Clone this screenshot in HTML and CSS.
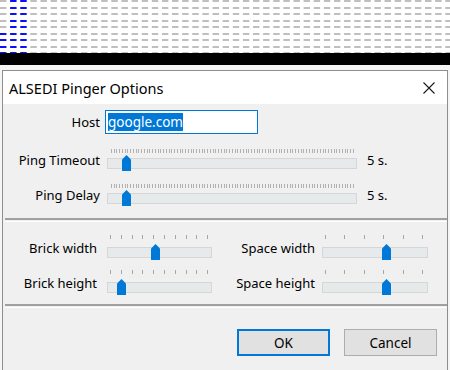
FILE: index.html
```html
<!DOCTYPE html>
<html lang="en">
<head>
    <meta charset="UTF-8">
    <meta name="viewport" content="width=device-width, initial-scale=1.0">
    <title>ALSEDI Pinger Options</title>
    <link rel="stylesheet" href="styles.css">
</head>
<body>
    <div class="desktop">
        <svg class="bricks" width="450" height="53" shape-rendering="crispEdges">
            <defs>
                <pattern id="brickGrey" width="10.12" height="13" patternUnits="userSpaceOnUse">
                    <rect x="0" y="0" width="6" height="2" fill="#bfbfbf"/>
                    <rect x="0" y="7" width="6" height="2" fill="#bfbfbf"/>
                </pattern>
                <pattern id="brickBlue" width="10.12" height="13" patternUnits="userSpaceOnUse">
                    <rect x="0" y="0" width="6" height="2" fill="#0a10ff"/>
                    <rect x="0" y="7" width="6" height="2" fill="#0a10ff"/>
                </pattern>
            </defs>
            <rect width="450" height="53" fill="#fff"/>
            <rect width="450" height="53" fill="url(#brickGrey)"/>
            <rect x="0" y="0" width="9" height="53" fill="#fff"/>
            <rect x="0" y="0" width="9" height="30" fill="url(#brickGrey)"/>
            <rect x="0" y="30" width="9" height="23" fill="url(#brickBlue)"/>
            <rect x="9" y="0" width="19" height="53" fill="#fff"/>
            <rect x="9" y="0" width="19" height="53" fill="url(#brickBlue)"/>
        </svg>
        <div class="band"></div>

        <div class="shade">
            <div class="dialog">
                <div class="titlebar">
                    <span class="title">ALSEDI Pinger Options</span>
                    <svg class="close" width="12" height="12" viewBox="0 0 12 12">
                        <path d="M0.5 0.5 L11.5 11.5 M11.5 0.5 L0.5 11.5" stroke="#1a1a1a" stroke-width="1.1" fill="none"/>
                    </svg>
                </div>

                <div class="content">
                    <section class="ping">
                        <label class="lbl">Host</label>
                        <div class="host"><span class="sel">google.com</span></div>
                        <span></span>

                        <label class="lbl lbl-slider">Ping Timeout</label>
                        <div class="slider slider-fine">
                            <div class="ticks"></div>
                            <div class="track"></div>
                            <div class="thumb" style="left: 15px"></div>
                        </div>
                        <span class="value">5 s.</span>

                        <label class="lbl lbl-slider">Ping Delay</label>
                        <div class="slider slider-fine">
                            <div class="ticks"></div>
                            <div class="track"></div>
                            <div class="thumb" style="left: 15px"></div>
                        </div>
                        <span class="value">5 s.</span>
                    </section>

                    <hr class="sep">

                    <section class="sizes">
                        <label class="lbl">Brick width</label>
                        <div class="slider slider-brick">
                            <div class="ticks"></div>
                            <div class="track"></div>
                            <div class="thumb" style="left: 44px"></div>
                        </div>
                        <label class="lbl lbl-space">Space width</label>
                        <div class="slider slider-space">
                            <div class="ticks"></div>
                            <div class="track"></div>
                            <div class="thumb" style="left: 60px"></div>
                        </div>

                        <label class="lbl">Brick height</label>
                        <div class="slider slider-brick">
                            <div class="ticks"></div>
                            <div class="track"></div>
                            <div class="thumb" style="left: 10px"></div>
                        </div>
                        <label class="lbl lbl-space">Space height</label>
                        <div class="slider slider-space">
                            <div class="ticks"></div>
                            <div class="track"></div>
                            <div class="thumb" style="left: 60px"></div>
                        </div>
                    </section>

                    <hr class="sep sep-bottom">

                    <div class="buttons">
                        <button class="btn btn-default">OK</button>
                        <button class="btn">Cancel</button>
                    </div>
                </div>
            </div>
        </div>
    </div>
</body>
</html>
```

FILE: styles.css
```css
body {
    margin: 0;
    font-family: "Noto Sans", sans-serif;
    font-size: 13px;
    color: #000;
}

.desktop {
    width: 450px;
    height: 370px;
    overflow: hidden;
    background-color: #f5f5f5;
}

.bricks {
    display: block;
}

.band {
    height: 12px;
    background-color: #000;
}

.shade {
    padding: 5px 0 0 2px;
}

.dialog {
    width: 446px;
    height: 320px;
    box-sizing: border-box;
    border: 1px solid #8e8e8e;
    border-bottom: none;
    background-color: #f0f0f0;
}

.titlebar {
    height: 33px;
    background-color: #fff;
    display: flex;
    align-items: center;
    justify-content: space-between;
    padding: 0 12px 0 6px;
}

.title {
    font-size: 14.5px;
}

.close {
    display: block;
}

.content {
    padding-top: 6px;
}

/* ping section */
.ping {
    display: grid;
    grid-template-columns: 102px 252px auto;
    row-gap: 13px;
    align-items: center;
}

.lbl {
    text-align: right;
    padding-right: 5px;
    white-space: nowrap;
}

.lbl-slider,
.value {
    padding-top: 4px;
}

.value {
    padding-left: 10px;
}

.host {
    width: 153px;
    height: 24px;
    box-sizing: border-box;
    border: 1px solid #0078d7;
    background-color: #fff;
    padding: 3px 2px;
    font-size: 13.5px;
    line-height: 16px;
}

.sel {
    background-color: #0078d7;
    color: #fff;
}

/* trackbars */
.slider {
    position: relative;
    padding-top: 2px;
}

.ticks {
    height: 4px;
    margin: 0 3px;
}

.track {
    height: 11px;
    box-sizing: border-box;
    border: 1px solid #d6d6d6;
    background-color: #e7eaea;
}

.thumb {
    position: absolute;
    bottom: -2px;
    width: 9px;
    height: 16px;
    background-color: #0078d7;
    clip-path: polygon(50% 0, 100% 28%, 100% 100%, 0 100%, 0 28%);
}

.slider-fine {
    margin-left: 2px;
    width: 250px;
}

.slider-fine .ticks {
    margin: 0 2px 0 4px;
    background: repeating-linear-gradient(90deg, #b0b0b0 0 1px, transparent 1px 2.75px);
}

.slider-fine .track {
    margin-top: 5px;
}

.slider-brick .ticks,
.slider-space .ticks {
    background: repeating-linear-gradient(90deg, #a6a6a6 0 1px, transparent 1px var(--step));
    width: calc(var(--step) * var(--count) + 1px);
}

.slider-brick {
    --step: 10.8px;
    --count: 9;
}

.slider-space {
    --step: 19.5px;
    --count: 5;
}

.slider-brick .track,
.slider-space .track {
    margin-top: 8px;
}

/* separators */
.sep {
    margin: 14px 0 0 2px;
    height: 1px;
    border: none;
    border-top: 2px solid #a0a0a0;
    border-bottom: 1px solid #fff;
}

.sep-bottom {
    margin-top: 11px;
}

/* size section */
.sizes {
    display: grid;
    grid-template-columns: 104px 105px 110px 106px;
    row-gap: 10px;
    align-items: center;
    margin-top: 11px;
}

.sizes .lbl {
    padding-right: 10px;
    padding-top: 4px;
}

.sizes .lbl-space {
    padding-right: 7px;
}

/* buttons */
.buttons {
    display: flex;
    justify-content: flex-end;
    gap: 14px;
    padding: 21px 10px 0 0;
}

.btn {
    width: 93px;
    height: 27px;
    box-sizing: border-box;
    border: 1px solid #adadad;
    background-color: #e1e1e1;
    font-family: "Noto Sans", sans-serif;
    font-size: 13.5px;
    padding: 0;
}

.btn-default {
    border: 2px solid #0078d7;
}
```
